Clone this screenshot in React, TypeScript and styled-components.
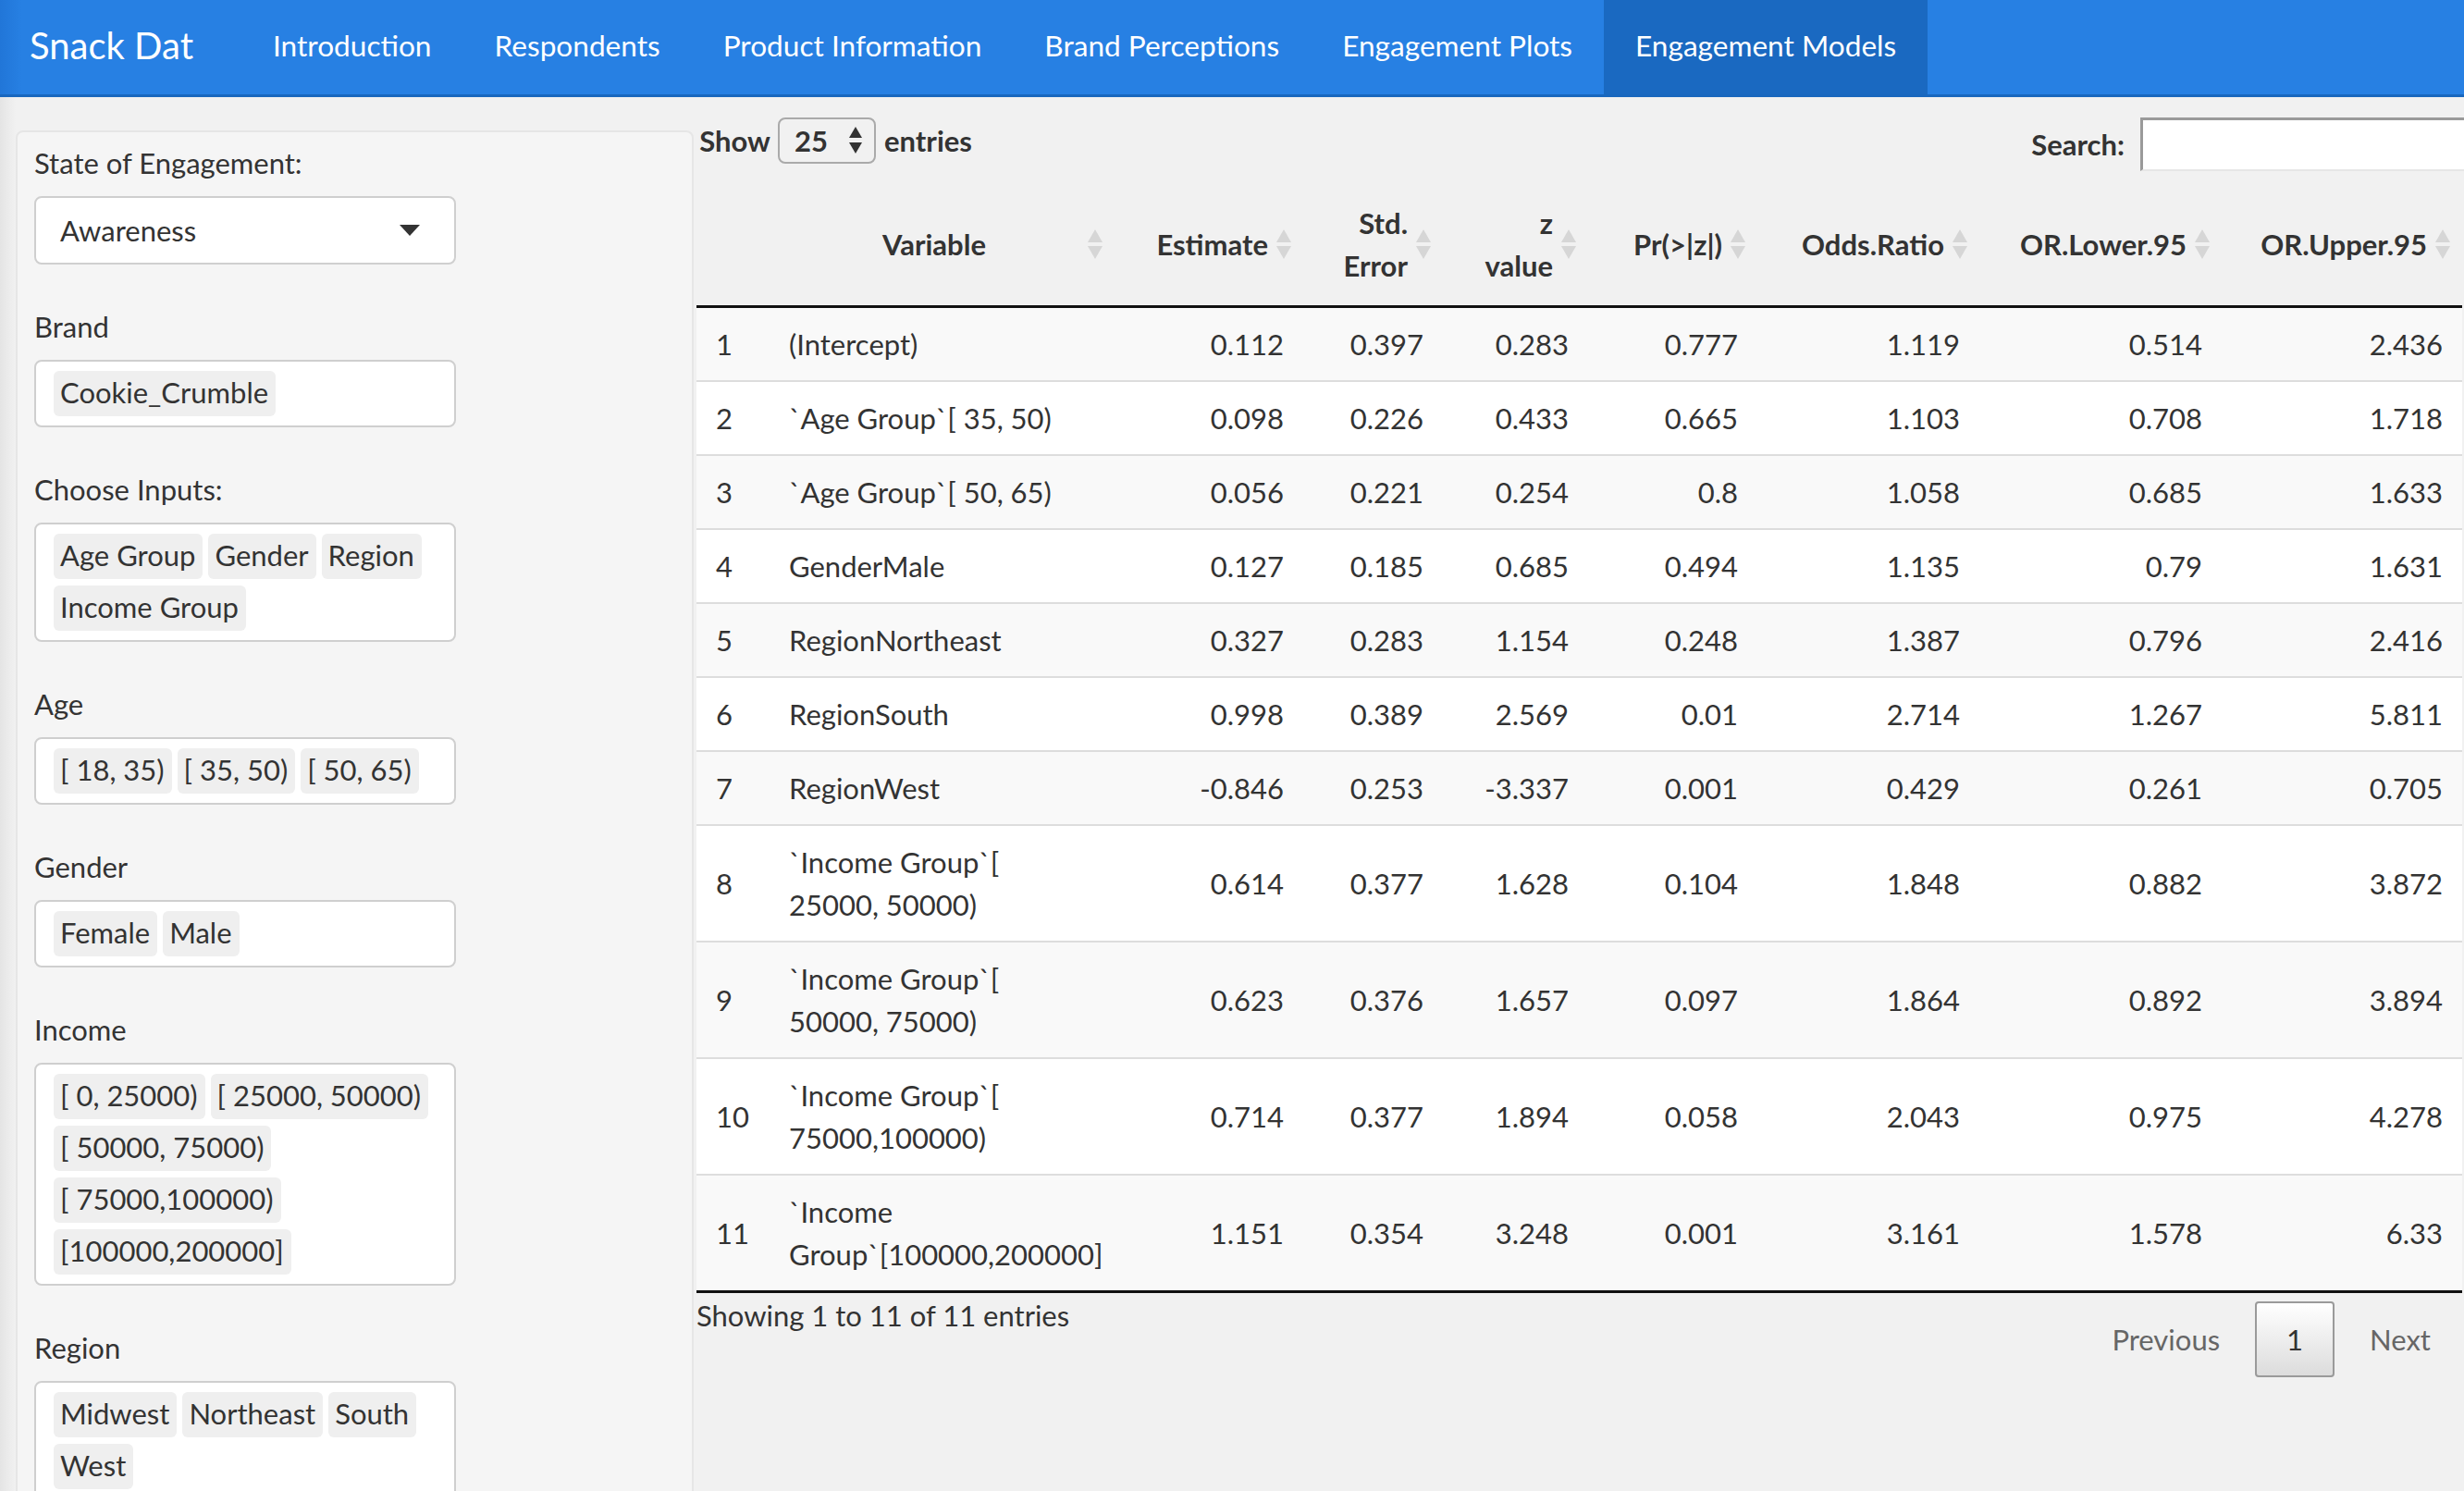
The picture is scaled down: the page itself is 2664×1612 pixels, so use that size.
import React from "react";
import styled, { createGlobalStyle } from "styled-components";

const GlobalStyle = createGlobalStyle`
  html, body {
    margin: 0;
    padding: 0;
    width: 2664px;
    height: 1612px;
    overflow: hidden;
    background: #f1f1f1;
    font-family: Lato, "Noto Sans", "Liberation Sans", sans-serif;
    font-size: 31px;
    line-height: 46px;
    color: #333;
  }
  * { box-sizing: border-box; }
`;

const Page = styled.div`
  width: 2664px;
  height: 1612px;
  display: flex;
  flex-direction: column;
  background: linear-gradient(to right, #e4e4e4 0, #ececec 10px, #f1f1f1 17px, #f1f1f1 100%);
`;

const Navbar = styled.nav`
  height: 105px;
  flex: none;
  display: flex;
  align-items: stretch;
  background: linear-gradient(to right, #2176d8 0, #2780e3 24px, #2780e3 100%);
  border-bottom: 3px solid #1967be;
  padding-left: 32px;
`;

const Brand = styled.div`
  font-size: 40px;
  color: #fff;
  display: flex;
  align-items: center;
  padding-bottom: 4px;
  margin-right: 52px;
`;

const NavList = styled.ul`
  list-style: none;
  margin: 0;
  padding: 0;
  display: flex;
  align-items: stretch;
`;

const NavItem = styled.li<{ $active?: boolean }>`
  display: flex;
  align-items: center;
  padding: 0 34px 4px;
  color: #fff;
  font-size: 31.6px;
  background: ${(p) => (p.$active ? "#1a69c1" : "transparent")};
`;

const Content = styled.div`
  flex: 1;
  display: flex;
  align-items: flex-start;
  padding-left: 17px;
  min-height: 0;
`;

const Well = styled.aside`
  width: 733px;
  flex: none;
  margin-top: 36px;
  padding: 10px 18px 0 18px;
  background: #f5f5f5;
  border: 2px solid #e6e6e6;
  border-radius: 8px;
  min-height: 1600px;
`;

const Group = styled.div`
  margin-bottom: 44px;
`;

const Label = styled.div`
  line-height: 46px;
  margin-bottom: 13px;
  color: #333;
`;

const SelectBox = styled.div`
  width: 456px;
  height: 74px;
  background: #fff;
  border: 2px solid #cfcfcf;
  border-radius: 8px;
  display: flex;
  align-items: center;
  justify-content: space-between;
  padding: 0 37px 0 26px;
`;

const MultiBox = styled.div`
  width: 456px;
  background: #fff;
  border: 2px solid #cfcfcf;
  border-radius: 8px;
  display: flex;
  flex-wrap: wrap;
  padding: 10px 14px 3px 19px;
`;

const Chip = styled.span`
  height: 49px;
  line-height: 47px;
  padding: 0 8px 0 7px;
  margin: 0 6px 7px 0;
  background: #efefef;
  border-radius: 6px;
  white-space: nowrap;
  color: #333;
`;

const Main = styled.main`
  width: 1909px;
  margin-left: 3px;
  flex: none;
  display: flex;
  flex-direction: column;
`;

const Controls = styled.div`
  margin-top: 22px;
  height: 58px;
  display: flex;
  justify-content: space-between;
  align-items: flex-start;
`;

const LengthLabel = styled.div`
  display: flex;
  align-items: center;
  height: 50px;
  font-weight: 700;
`;

const LengthSelect = styled.div`
  width: 106px;
  height: 50px;
  margin: 0 9px 0 88px;
  position: relative;
  border: 2px solid #aaa;
  border-radius: 8px;
  display: flex;
  align-items: center;
  justify-content: space-between;
  padding: 0 12px 0 16px;
  font-weight: 700;
`;

const ShowText = styled.span`
  position: absolute;
  right: calc(100% + 10px);
`;

const Filter = styled.label`
  display: flex;
  align-items: center;
  height: 58px;
  font-weight: 700;
  margin-right: -14px;
`;

const SearchInput = styled.div`
  width: 362px;
  height: 58px;
  margin-left: 17px;
  background: #fff;
  border-top: 3px solid #9a9a9a;
  border-left: 3px solid #9a9a9a;
  border-bottom: 2px solid #e6e6e6;
  border-right: 2px solid #e6e6e6;
`;

const Table = styled.table`
  margin-top: 13px;
  width: 1909px;
  border-collapse: collapse;
  table-layout: fixed;
`;

const Th = styled.th<{ $align: "left" | "center" | "right" }>`
  position: relative;
  padding: 20px 38px 20px 21px;
  font-weight: 700;
  line-height: 46px;
  text-align: ${(p) => p.$align};
  vertical-align: middle;
  white-space: nowrap;
  color: #333;
  border-bottom: 3px solid #111;
`;

const SortIcon = styled.svg`
  position: absolute;
  right: 13px;
  top: 50%;
  margin-top: -16px;
`;

const Tr = styled.tr<{ $odd: boolean; $last: boolean }>`
  background: ${(p) => (p.$odd ? "#f9f9f9" : "#ffffff")};
  border-top: 2px solid #dddddd;
  border-bottom: ${(p) => (p.$last ? "3px solid #111" : "none")};
  &:first-child { border-top: none; }
`;

const Td = styled.td<{ $align: "left" | "right" }>`
  padding: 16px 21px 16px;
  line-height: 46px;
  text-align: ${(p) => p.$align};
  vertical-align: middle;
  color: #333;
  white-space: nowrap;
`;

const Footer = styled.div`
  display: flex;
  justify-content: space-between;
  align-items: flex-start;
`;

const Info = styled.div`
  padding-top: 1px;
  line-height: 46px;
`;

const Paging = styled.div`
  display: flex;
  padding-top: 9px;
`;

const PageButton = styled.span<{ $current?: boolean }>`
  padding: 16px 32px;
  margin-left: 4px;
  line-height: 46px;
  border-radius: 4px;
  border: 2px solid ${(p) => (p.$current ? "#9a9a9a" : "transparent")};
  color: ${(p) => (p.$current ? "#333" : "#666")};
  background: ${(p) => (p.$current ? "linear-gradient(to bottom, #ffffff 0%, #dcdcdc 100%)" : "transparent")};
`;

const SortArrows = () => (
  <SortIcon width="16" height="32" viewBox="0 0 16 32">
    <polygon points="8,0 16,14 0,14" fill="#d6d6d6" />
    <polygon points="0,18 16,18 8,32" fill="#d6d6d6" />
  </SortIcon>
);

const Caret = () => (
  <svg width="22" height="12" viewBox="0 0 22 12">
    <polygon points="0,0 22,0 11,12" fill="#333" />
  </svg>
);

const Spinner = () => (
  <svg width="16" height="32" viewBox="0 0 16 32">
    <polygon points="8,1 15,13 1,13" fill="#333" />
    <polygon points="1,18 15,18 8,30" fill="#333" />
  </svg>
);

const navItems = [
  "Introduction",
  "Respondents",
  "Product Information",
  "Brand Perceptions",
  "Engagement Plots",
  "Engagement Models",
];

const groups: { label: string; chips: string[] }[] = [
  { label: "Brand", chips: ["Cookie_Crumble"] },
  { label: "Choose Inputs:", chips: ["Age Group", "Gender", "Region", "Income Group"] },
  { label: "Age", chips: ["[ 18, 35)", "[ 35, 50)", "[ 50, 65)"] },
  { label: "Gender", chips: ["Female", "Male"] },
  {
    label: "Income",
    chips: ["[ 0, 25000)", "[ 25000, 50000)", "[ 50000, 75000)", "[ 75000,100000)", "[100000,200000]"],
  },
  { label: "Region", chips: ["Midwest", "Northeast", "South", "West"] },
];

const colWidths = [79, 373, 204, 151, 157, 183, 240, 262, 260];

const headers: { lines: string[]; align: "left" | "center" | "right"; sort: boolean }[] = [
  { lines: [""], align: "left", sort: false },
  { lines: ["Variable"], align: "center", sort: true },
  { lines: ["Estimate"], align: "right", sort: true },
  { lines: ["Std.", "Error"], align: "right", sort: true },
  { lines: ["z", "value"], align: "right", sort: true },
  { lines: ["Pr(>|z|)"], align: "right", sort: true },
  { lines: ["Odds.Ratio"], align: "right", sort: true },
  { lines: ["OR.Lower.95"], align: "right", sort: true },
  { lines: ["OR.Upper.95"], align: "right", sort: true },
];

const rows: { v: string[]; n: string[] }[] = [
  { v: ["(Intercept)"], n: ["0.112", "0.397", "0.283", "0.777", "1.119", "0.514", "2.436"] },
  { v: ["`Age Group`[ 35, 50)"], n: ["0.098", "0.226", "0.433", "0.665", "1.103", "0.708", "1.718"] },
  { v: ["`Age Group`[ 50, 65)"], n: ["0.056", "0.221", "0.254", "0.8", "1.058", "0.685", "1.633"] },
  { v: ["GenderMale"], n: ["0.127", "0.185", "0.685", "0.494", "1.135", "0.79", "1.631"] },
  { v: ["RegionNortheast"], n: ["0.327", "0.283", "1.154", "0.248", "1.387", "0.796", "2.416"] },
  { v: ["RegionSouth"], n: ["0.998", "0.389", "2.569", "0.01", "2.714", "1.267", "5.811"] },
  { v: ["RegionWest"], n: ["-0.846", "0.253", "-3.337", "0.001", "0.429", "0.261", "0.705"] },
  { v: ["`Income Group`[", "25000, 50000)"], n: ["0.614", "0.377", "1.628", "0.104", "1.848", "0.882", "3.872"] },
  { v: ["`Income Group`[", "50000, 75000)"], n: ["0.623", "0.376", "1.657", "0.097", "1.864", "0.892", "3.894"] },
  { v: ["`Income Group`[", "75000,100000)"], n: ["0.714", "0.377", "1.894", "0.058", "2.043", "0.975", "4.278"] },
  { v: ["`Income", "Group`[100000,200000]"], n: ["1.151", "0.354", "3.248", "0.001", "3.161", "1.578", "6.33"] },
];

const Lines = ({ lines }: { lines: string[] }) => (
  <>
    {lines.map((l, i) => (
      <React.Fragment key={i}>
        {i > 0 && <br />}
        {l}
      </React.Fragment>
    ))}
  </>
);

export default function App() {
  return (
    <>
      <GlobalStyle />
      <Page>
        <Navbar>
          <Brand>Snack Dat</Brand>
          <NavList>
            {navItems.map((n) => (
              <NavItem key={n} $active={n === "Engagement Models"}>
                {n}
              </NavItem>
            ))}
          </NavList>
        </Navbar>
        <Content>
          <Well>
            <Group>
              <Label>State of Engagement:</Label>
              <SelectBox>
                <span>Awareness</span>
                <Caret />
              </SelectBox>
            </Group>
            {groups.map((g) => (
              <Group key={g.label}>
                <Label>{g.label}</Label>
                <MultiBox>
                  {g.chips.map((c) => (
                    <Chip key={c}>{c}</Chip>
                  ))}
                </MultiBox>
              </Group>
            ))}
          </Well>
          <Main>
            <Controls>
              <LengthLabel>
                <LengthSelect>
                  <ShowText>Show</ShowText>
                  <span>25</span>
                  <Spinner />
                </LengthSelect>
                entries
              </LengthLabel>
              <Filter>
                Search:
                <SearchInput />
              </Filter>
            </Controls>
            <Table>
              <colgroup>
                {colWidths.map((w, i) => (
                  <col key={i} style={{ width: w }} />
                ))}
              </colgroup>
              <thead>
                <tr>
                  {headers.map((h, i) => (
                    <Th key={i} $align={h.align}>
                      <Lines lines={h.lines} />
                      {h.sort && <SortArrows />}
                    </Th>
                  ))}
                </tr>
              </thead>
              <tbody>
                {rows.map((r, i) => (
                  <Tr key={i} $odd={i % 2 === 0} $last={i === rows.length - 1}>
                    <Td $align="left">{i + 1}</Td>
                    <Td $align="left">
                      <Lines lines={r.v} />
                    </Td>
                    {r.n.map((x, j) => (
                      <Td key={j} $align="right">
                        {x}
                      </Td>
                    ))}
                  </Tr>
                ))}
              </tbody>
            </Table>
            <Footer>
              <Info>Showing 1 to 11 of 11 entries</Info>
              <Paging>
                <PageButton>Previous</PageButton>
                <PageButton $current>1</PageButton>
                <PageButton>Next</PageButton>
              </Paging>
            </Footer>
          </Main>
        </Content>
      </Page>
    </>
  );
}
